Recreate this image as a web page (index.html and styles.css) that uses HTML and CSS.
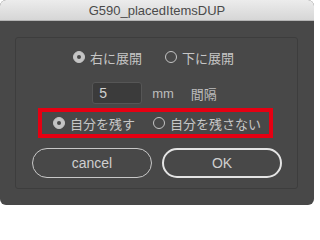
FILE: index.html
```html
<!DOCTYPE html>
<html>
<head>
<meta charset="utf-8">
<link rel="stylesheet" href="styles.css">
</head>
<body>
<div class="window">
  <div class="titlebar">G590_placedItemsDUP</div>
  <div class="content">
    <div class="panel">
      <div class="row row-dir">
        <label class="radio"><span class="dot on"></span><span class="lbl">右に展開</span></label>
        <label class="radio"><span class="dot"></span><span class="lbl">下に展開</span></label>
      </div>
      <div class="row row-gap">
        <div class="input">5</div>
        <span class="unit">mm</span>
        <span class="unit-lbl">間隔</span>
      </div>
      <div class="row row-keep">
        <label class="radio"><span class="dot on"></span><span class="lbl">自分を残す</span></label>
        <label class="radio"><span class="dot"></span><span class="lbl">自分を残さない</span></label>
      </div>
      <div class="row row-btns">
        <div class="btn">cancel</div>
        <div class="btn default">OK</div>
      </div>
    </div>
  </div>
</div>
</body>
</html>
```

FILE: styles.css
```css
html, body {
  margin: 0;
  padding: 0;
  background: #ffffff;
}
body {
  width: 314px;
  height: 205px;
  overflow: hidden;
  font-family: "Liberation Sans", "Noto Sans CJK JP", sans-serif;
}
.window {
  width: 314px;
  height: 205px;
  background: #484848;
  border-radius: 6px;
  overflow: hidden;
  display: flex;
  flex-direction: column;
}
.titlebar {
  height: 21px;
  box-sizing: border-box;
  background: linear-gradient(#ececec, #d6d6d6);
  border-bottom: 1px solid #b4b4b4;
  color: #4a4a4a;
  font-size: 13px;
  line-height: 21px;
  text-align: center;
}
.content {
  flex: 1;
  padding: 16px 16px 16px 15px;
  display: flex;
}
.panel {
  flex: 1;
  border: 1px solid #3d3d3d;
  border-radius: 3px;
  display: flex;
  flex-direction: column;
  align-items: center;
}
.row {
  display: flex;
  align-items: center;
}
.row-dir {
  margin-top: 9px;
  height: 20px;
  gap: 23px;
  margin-left: -6px;
}
.radio {
  display: flex;
  align-items: center;
  gap: 5px;
  color: #c6c6c6;
  font-family: "Noto Sans CJK JP", sans-serif;
  font-size: 13px;
}
.dot {
  width: 12px;
  height: 12px;
  box-sizing: border-box;
  border-radius: 50%;
  border: 1px solid #c4c4c4;
  position: relative;
}
.dot.on {
  background: #c4c4c4;
}
.dot.on::after {
  content: "";
  position: absolute;
  left: 3px;
  top: 3px;
  width: 4px;
  height: 4px;
  border-radius: 50%;
  background: #484848;
}
.row-gap {
  margin-top: 15px;
  height: 22px;
  margin-left: -4px;
}
.input {
  width: 50px;
  height: 22px;
  box-sizing: border-box;
  background: #3b3b3b;
  border: 1px solid #565656;
  border-radius: 3px;
  color: #d0d0d0;
  font-size: 14px;
  line-height: 20px;
  padding-left: 6px;
}
.unit {
  margin-left: 10px;
  color: #bdbdbd;
  font-size: 13px;
}
.unit-lbl {
  margin-left: 17px;
  color: #bdbdbd;
  font-family: "Noto Sans CJK JP", sans-serif;
  font-size: 13px;
}
.row-keep {
  margin-top: 4px;
  height: 30px;
  box-sizing: border-box;
  width: 235px;
  border: 4px solid #e60012;
  padding-left: 11px;
  gap: 18px;
  margin-left: -2px;
}
.row-btns {
  margin-top: 10px;
  gap: 10px;
  margin-left: 1px;
}
.btn {
  width: 120px;
  height: 30px;
  box-sizing: border-box;
  border: 1px solid #c8c8c8;
  border-radius: 15px;
  color: #cfcfcf;
  font-size: 14px;
  line-height: 28px;
  text-align: center;
}
.btn.default {
  border: 2px solid #e4e4e4;
  line-height: 26px;
}
```
